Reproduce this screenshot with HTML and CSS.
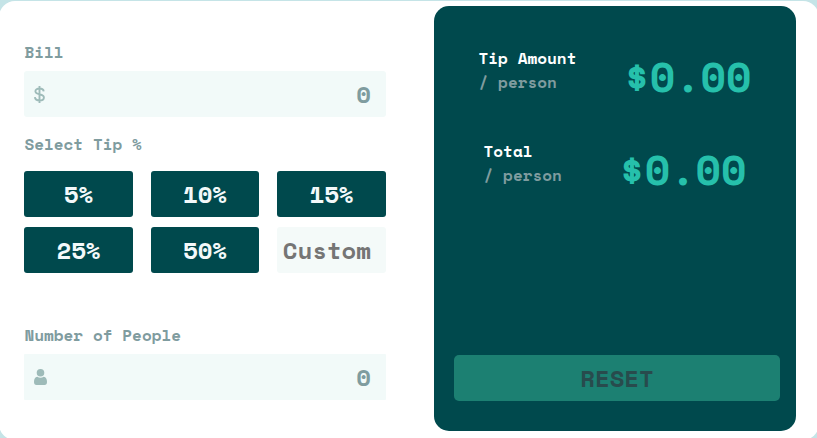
FILE: index.html
```html
<!DOCTYPE html>
<html lang="en">
<head>
<meta charset="utf-8">
<title>Tip Calculator</title>
<link rel="stylesheet" href="styles.css">
</head>
<body>
<main class="card">
  <section class="form">
    <div class="label">Bill</div>
    <div class="field">
      <svg class="icon-dollar" width="11" height="17" viewBox="0 0 11 17"><path fill="none" stroke="#9ebbb9" stroke-width="1.9" d="M9.7 5.4C9.5 3.4 7.9 2.5 5.5 2.5S1.4 3.5 1.4 5.3c0 4.4 8.5 1.7 8.5 6.1 0 2-1.8 3-4.3 3S1 13.3.9 11.1M5.5 0v17"/></svg>
      <span class="value">0</span>
    </div>
    <div class="label label-tip">Select Tip %</div>
    <div class="tips">
      <button class="tip">5%</button>
      <button class="tip">10%</button>
      <button class="tip">15%</button>
      <button class="tip">25%</button>
      <button class="tip">50%</button>
      <div class="custom">Custom</div>
    </div>
    <div class="label label-people">Number of People</div>
    <div class="field field-people">
      <svg class="icon-person" width="13" height="16" viewBox="0 0 13 16"><path fill="#9ebbb9" d="M6.5 0a3.8 3.8 0 0 1 0 7.6 3.8 3.8 0 0 1 0-7.6zM3.3 7.7c2 1.4 4.4 1.4 6.4 0C12.1 8 13 10 13 13c0 2-.8 3-2.5 3h-8C.8 16 0 15 0 13c0-3 .9-5 3.3-5.3z"/></svg>
      <span class="value">0</span>
    </div>
  </section>
  <section class="panel">
    <div class="result">
      <div class="caption">Tip Amount<div class="per">/ person</div></div>
      <div class="amount">$0.00</div>
    </div>
    <div class="result result-total">
      <div class="caption">Total<div class="per">/ person</div></div>
      <div class="amount">$0.00</div>
    </div>
    <button class="reset">RESET</button>
  </section>
</main>
</body>
</html>
```
FILE: styles.css
```css
* {
  box-sizing: border-box;
}

body {
  margin: 0;
  height: 438px;
  overflow: hidden;
  background: #c5e4e7;
  font-family: "Space Mono", "Liberation Mono", monospace;
  font-weight: 700;
}

.card {
  display: flex;
  gap: 48px;
  width: 820px;
  height: 439px;
  margin: 1px 0 0 -1px;
  padding: 5px 23px 8px 25px;
  border-radius: 16px;
  background: #fff;
}

.form {
  display: flex;
  flex-direction: column;
  width: 362px;
  padding-top: 34px;
}

.label {
  height: 24px;
  padding-left: 0.4px;
  font-size: 16px;
  line-height: 24px;
  color: #7f9c9f;
}

.field {
  display: flex;
  align-items: center;
  justify-content: space-between;
  height: 46px;
  margin-top: 7px;
  padding: 0 15px 0 10px;
  border-radius: 3px;
  background: #f2faf9;
}

.icon-dollar {
  margin-top: 1px;
}

.value {
  margin-top: -1px;
  font-size: 24px;
  line-height: 36px;
  color: #7f9c9f;
}

.label-tip {
  margin-top: 15px;
}

.tips {
  display: grid;
  grid-template-columns: 109px 108px 109px;
  grid-auto-rows: 46px;
  gap: 10px 18px;
  margin-top: 15px;
}

.tip,
.reset {
  padding: 0 0 1px;
  border: 0;
  border-radius: 3px;
  font: inherit;
  font-size: 24px;
}

.tip {
  background: #00494d;
  color: #f3f9fa;
}

.custom {
  padding: 0 15px 0 0;
  border-radius: 3px;
  background: #f4faf9;
  color: #757575;
  font-size: 24px;
  line-height: 46px;
  text-align: right;
}

.label-people {
  margin-top: 50px;
}

.field-people {
  border-radius: 1px;
}

.panel {
  display: flex;
  flex-direction: column;
  width: 362px;
  height: 425px;
  padding: 40px 16px 30px 20px;
  border-radius: 15px;
  background: #00494d;
}

.result {
  display: flex;
  justify-content: space-between;
  height: 62px;
  padding: 0 28.5px 0 24.5px;
}

.result-total {
  margin-top: 31px;
  padding: 0 33.5px 0 29.5px;
}

.caption {
  font-size: 16px;
  line-height: 24px;
  color: #fff;
}

.per {
  color: #7f9c9f;
}

.amount {
  font-size: 41.6px;
  line-height: 60px;
  color: #26c0ab;
}

.reset {
  height: 46px;
  margin-top: auto;
  border-radius: 5px;
  background: #1c8072;
  color: #284b4d;
}
```
